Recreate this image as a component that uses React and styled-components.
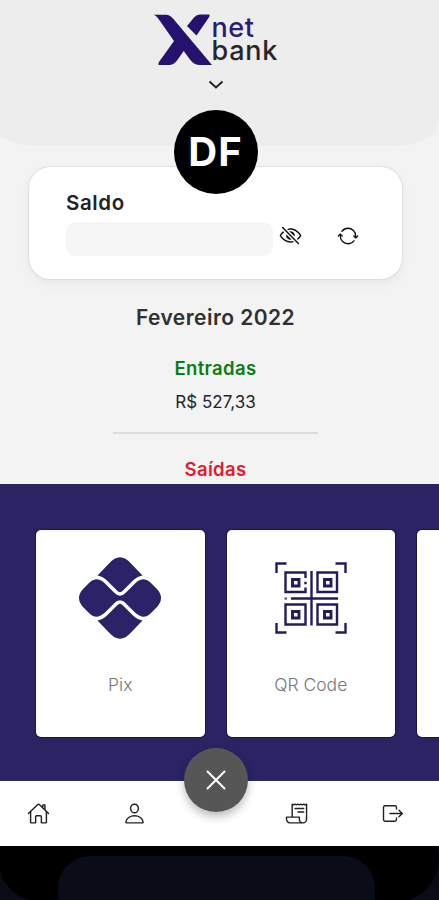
import React from "react";
import styled, { createGlobalStyle } from "styled-components";
import {
  IoEyeOffOutline,
  IoSyncOutline,
  IoHomeOutline,
  IoPersonOutline,
  IoReceiptOutline,
} from "react-icons/io5";

const GlobalStyle = createGlobalStyle`
* {
  box-sizing: border-box;
}
body {
  margin: 0;
  background: #090b16;
  font-family: Inter, "Open Sans", sans-serif;
}
svg {
  flex: none;
}
`;

const PixLogo = () => (
  <svg width="84" height="84" viewBox="0 0 84 84" fill="#2a2367">
    <path d="M19.5 19.5 L31 7.5 Q42 -5 53 7.5 L64.5 19.5 Q59 20.5 55 24.5 L45 34.5 Q42 38 39 34.5 L29 24.5 Q25 20.5 19.5 19.5Z" />
    <path d="M19.5 64.5 L31 76.5 Q42 89 53 76.5 L64.5 64.5 Q59 63.5 55 59.5 L45 49.5 Q42 46 39 49.5 L29 59.5 Q25 63.5 19.5 64.5Z" />
    <path d="M17 23.4 Q22 22.8 27 27.5 L36 36.5 Q39 39.7 42 39.8 Q45 39.7 48 36.5 L57 27.5 Q62 22.8 67 23.4 Q70 24 72.5 26.5 L78 32 Q88 42 78 52 L72.5 57.5 Q70 60 67 60.6 Q62 61.2 57 56.5 L48 47.5 Q45 44.3 42 44.2 Q39 44.3 36 47.5 L27 56.5 Q22 61.2 17 60.6 Q14 60 11.5 57.5 L6 52 Q-4 42 6 32 L11.5 26.5 Q14 24 17 23.4Z" />
  </svg>
);

const QrLogo = () => (
  <svg width="72" height="72" viewBox="0 0 72 72" fill="none" stroke="#241b5c" strokeWidth="2.4">
    <path d="M1.5 11V1.5H11.5M60.5 1.5H70.5V11M1.5 61V70.5H11.5M60.5 70.5H70.5V61" />
    <path d="M30.5 16V10.5H10.5V30H30.5V25.5M30.5 19.7V22.3" />
    <path d="M42.5 10.5H62V30H42.5ZM10.5 42.5H30.5V62.5H10.5ZM42.5 42.5H62V62.5H42.5Z" />
    <path d="M36.5 9V63.5M16 36.5H63" />
    <path d="M9.5 36.5H12" opacity="0.7" />
    <path strokeWidth="2.9" d="M17.5 17.5H24V24H17.5ZM49.5 17.5H56V24H49.5ZM17.5 49.5H24V56H17.5ZM49.5 49.5H56V56H49.5Z" />
  </svg>
);

const ExitIcon = () => (
  <svg width="23" height="23" viewBox="0 0 23 23" fill="none" stroke="currentColor" strokeWidth="1.4" strokeLinecap="round" strokeLinejoin="round">
    <path d="M15.5 7V5.5Q15.5 3.8 13.8 3.8H4.2Q2.5 3.8 2.5 5.5V17.5Q2.5 19.2 4.2 19.2H13.8Q15.5 19.2 15.5 17.5V16" />
    <path d="M9 11.5H21M18 8.2L21.3 11.5L18 14.8" />
  </svg>
);

const App = () => {
  return (
    <>
      <GlobalStyle />
      <Phone>
        <Header>
          <Brand>
            <svg width="58" height="52" viewBox="0 0 58 52" fill="#25126f">
              <path d="M0 0.7 H12 Q16 0.7 19 4.5 L58 51 H46 Q40 51 36 45.5 L29.7 37 L23 46.5 Q19.5 51 15 51 H4.5 Q4 50 5 48 L20 27 L6 7 Q3 2 0 0.7Z" />
              <path d="M46 0.5 H55.5 Q56 2 54.5 4 L42.5 21.5 L33 12 L40 3.5 Q42.5 0.5 46 0.5Z" />
            </svg>
            <BrandName>
              <BrandWord $color="#2b1a76" $spacing="0.6px">net</BrandWord>
              <BrandWord $color="#29262b" $spacing="0.7px">bank</BrandWord>
            </BrandName>
          </Brand>
          <svg width="16" height="10" viewBox="0 0 16 10" fill="none" stroke="#222" strokeWidth="2">
            <path d="M1.5 1.5L8 7.5L14.5 1.5" />
          </svg>
          <Avatar>DF</Avatar>
        </Header>

        <BalanceCard>
          <BalanceTitle>Saldo</BalanceTitle>
          <BalanceRow>
            <HiddenValue />
            <IconButton><IoEyeOffOutline size={23} /></IconButton>
            <IconButton><IoSyncOutline size={22} /></IconButton>
          </BalanceRow>
        </BalanceCard>

        <Summary>
          <Month>Fevereiro 2022</Month>
          <Label $color="#0b7d12">Entradas</Label>
          <Amount>R$ 527,33</Amount>
          <Divider />
          <Label $color="#e8192c">Saídas</Label>
        </Summary>

        <Services>
          <ServiceCard>
            <PixLogo />
            <ServiceName>Pix</ServiceName>
          </ServiceCard>
          <ServiceCard>
            <QrLogo />
            <ServiceName>QR Code</ServiceName>
          </ServiceCard>
          <ServiceCard />
        </Services>

        <NavBar>
          <NavGroup>
            <IoHomeOutline />
            <IoPersonOutline />
          </NavGroup>
          <CloseButton>
            <svg width="20" height="20" viewBox="0 0 20 20" stroke="#fff" strokeWidth="2" strokeLinecap="round">
              <path d="M1.5 1.5L18.5 18.5M18.5 1.5L1.5 18.5" />
            </svg>
          </CloseButton>
          <NavGroup>
            <IoReceiptOutline />
            <ExitIcon />
          </NavGroup>
        </NavBar>

        <PhoneBase>
          <Stand />
        </PhoneBase>
      </Phone>
    </>
  );
};

const Phone = styled.div`
  display: flex;
  flex-direction: column;
  width: 439px;
  height: 900px;
  overflow: hidden;
  background: #f3f3f3;
`;

const Header = styled.header`
  display: flex;
  flex-direction: column;
  align-items: center;
  flex: none;
  width: 447px;
  height: 146px;
  margin-left: -8px;
  padding-top: 14px;
  background: #ededed;
  border-radius: 0 0 44px 44px / 0 0 26px 26px;
`;

const Brand = styled.div`
  display: flex;
  flex: none;
  height: 52px;
  margin-bottom: 14px;
`;

const BrandName = styled.div`
  display: flex;
  flex-direction: column;
  width: 66px;
  padding-top: 2px;
`;

const BrandWord = styled.span`
  height: 23px;
  font-size: 27px;
  font-weight: 500;
  line-height: 23px;
  letter-spacing: ${(props) => props.$spacing};
  color: ${(props) => props.$color};
`;

const Avatar = styled.div`
  display: flex;
  align-items: center;
  justify-content: center;
  flex: none;
  width: 84px;
  height: 84px;
  margin-top: 20px;
  padding-bottom: 2px;
  border-radius: 50%;
  background: #000;
  color: #fff;
  font-size: 40px;
  font-weight: 700;
  letter-spacing: 1px;
  z-index: 1;
`;

const BalanceCard = styled.section`
  flex: none;
  width: 373px;
  height: 112px;
  margin: 21px 0 0 29px;
  padding: 24px 37px 0;
  border-radius: 21px;
  background: #fff;
  box-shadow: 0 0 2px rgba(0, 0, 0, 0.2), 0 4px 12px rgba(0, 0, 0, 0.05);
`;

const BalanceTitle = styled.h2`
  margin: 0;
  font-size: 20.5px;
  font-weight: 600;
  line-height: 24px;
  letter-spacing: 0.6px;
  color: #222;
`;

const BalanceRow = styled.div`
  display: flex;
  align-items: center;
  margin-top: 7px;
`;

const HiddenValue = styled.div`
  flex: none;
  width: 207px;
  height: 34px;
  border-radius: 9px;
  background: #f6f6f6;
`;

const IconButton = styled.span`
  display: flex;
  justify-content: center;
  flex: none;
  width: 24px;
  margin: -7px 28px 0 5px;
  color: #111;

  & + & {
    margin-left: 6px;
  }
`;

const Summary = styled.section`
  display: flex;
  flex-direction: column;
  align-items: center;
  flex: none;
  width: 431px;
  height: 205px;
  padding-top: 26px;
`;

const Month = styled.h3`
  margin: 0 0 24px;
  font-size: 21px;
  font-weight: 600;
  line-height: 26px;
  letter-spacing: 0.45px;
  color: #303030;
`;

const Label = styled.h4`
  margin: 0;
  font-size: 18.5px;
  font-weight: 600;
  line-height: 26px;
  letter-spacing: 0.35px;
  color: ${(props) => props.$color};
`;

const Amount = styled.span`
  margin-top: 9px;
  font-size: 17px;
  line-height: 24px;
  color: #252525;
`;

const Divider = styled.hr`
  width: 205px;
  height: 2px;
  margin: 18px 0 22px;
  border: none;
  background: #dcdcdc;
`;

const Services = styled.section`
  display: flex;
  gap: 22px;
  flex: none;
  height: 297px;
  padding: 46px 0 0 36px;
  background: #2a2364;
  overflow: hidden;
`;

const ServiceCard = styled.div`
  display: flex;
  flex-direction: column;
  align-items: center;
  justify-content: space-between;
  flex: none;
  width: 168.5px;
  height: 207px;
  padding: 26px 0 40px;
  border-radius: 5px;
  background: #fff;
  box-shadow: 0 0 0 1px #1b1259;

  &:nth-child(2) {
    padding-top: 32px;
  }
`;

const ServiceName = styled.span`
  font-size: 17.5px;
  font-weight: 300;
  line-height: 24px;
  color: #777;
`;

const NavBar = styled.nav`
  display: flex;
  align-items: center;
  justify-content: space-between;
  flex: none;
  height: 65px;
  padding: 0 35px 0 27px;
  background: #fff;
`;

const NavGroup = styled.div`
  display: flex;
  justify-content: space-between;
  width: 119px;
  font-size: 23px;
  color: #222;
`;

const CloseButton = styled.button`
  display: flex;
  align-items: center;
  justify-content: center;
  width: 64px;
  height: 64px;
  margin-top: -68px;
  padding: 0;
  border: none;
  border-radius: 50%;
  background: #565656;
  box-shadow: 0 5px 8px rgba(0, 0, 0, 0.25);
`;

const PhoneBase = styled.footer`
  flex: none;
  height: 54px;
  padding: 10px 0 0 58px;
  background: radial-gradient(circle at 40px 14px, #000 41px, #090b16 42px) 0 0 / 40px 54px no-repeat,
    radial-gradient(circle at 0 14px, #000 41px, #090b16 42px) 100% 0 / 42px 54px no-repeat, #000;
`;

const Stand = styled.div`
  width: 317px;
  height: 80px;
  border-radius: 32px;
  background: #0a0c17;
`;

export default App;
